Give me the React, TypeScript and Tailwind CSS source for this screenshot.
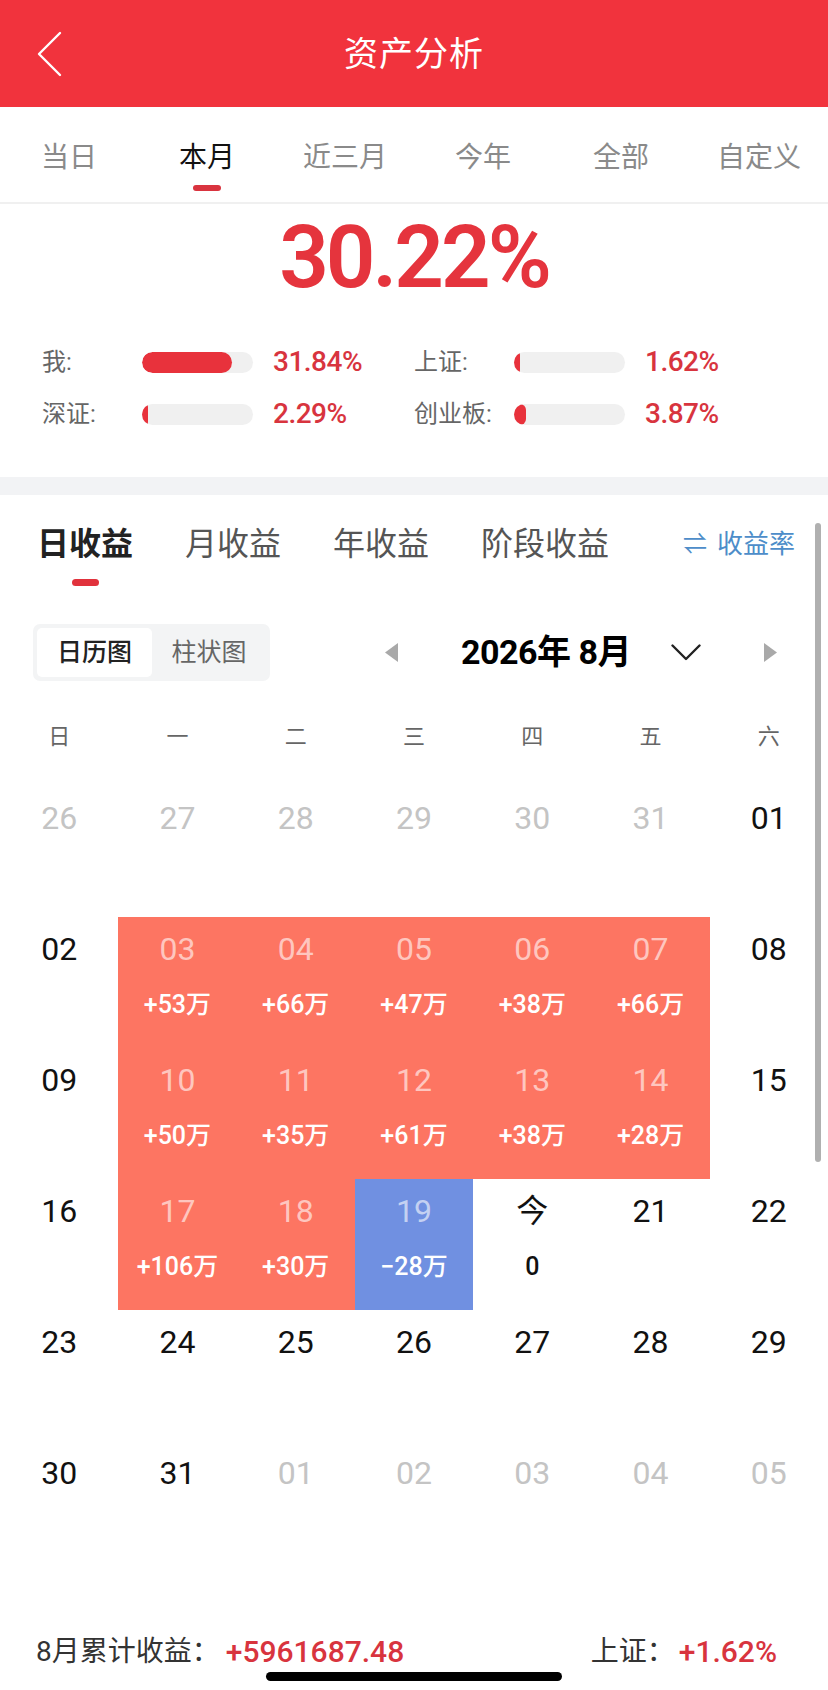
import React from "react";

/* ---------- Data ---------- */

const periodTabs = ["当日", "本月", "近三月", "今年", "全部", "自定义"];
const profitTabs = ["日收益", "月收益", "年收益", "阶段收益"];
const weekDays = ["日", "一", "二", "三", "四", "五", "六"];

type Compare = { label: string; fill: number; value: string };

const compares: Compare[] = [
  { label: "我:", fill: 90, value: "31.84%" },
  { label: "上证:", fill: 6, value: "1.62%" },
  { label: "深证:", fill: 6, value: "2.29%" },
  { label: "创业板:", fill: 12, value: "3.87%" },
];

type Day = {
  n: string;
  muted?: boolean;
  value?: string;
  tone?: "up" | "down" | "today";
};

const up = (n: string, value: string): Day => ({ n, value, tone: "up" });

const weeks: Day[][] = [
  [
    { n: "26", muted: true },
    { n: "27", muted: true },
    { n: "28", muted: true },
    { n: "29", muted: true },
    { n: "30", muted: true },
    { n: "31", muted: true },
    { n: "01" },
  ],
  [{ n: "02" }, up("03", "+53万"), up("04", "+66万"), up("05", "+47万"), up("06", "+38万"), up("07", "+66万"), { n: "08" }],
  [{ n: "09" }, up("10", "+50万"), up("11", "+35万"), up("12", "+61万"), up("13", "+38万"), up("14", "+28万"), { n: "15" }],
  [
    { n: "16" },
    up("17", "+106万"),
    up("18", "+30万"),
    { n: "19", value: "−28万", tone: "down" },
    { n: "今", value: "0", tone: "today" },
    { n: "21" },
    { n: "22" },
  ],
  [{ n: "23" }, { n: "24" }, { n: "25" }, { n: "26" }, { n: "27" }, { n: "28" }, { n: "29" }],
  [
    { n: "30" },
    { n: "31" },
    { n: "01", muted: true },
    { n: "02", muted: true },
    { n: "03", muted: true },
    { n: "04", muted: true },
    { n: "05", muted: true },
  ],
];

/* ---------- Pieces ---------- */

function CompareRow({ item }: { item: Compare }) {
  return (
    <div className="flex items-center h-[52px]">
      <span className="w-[100px] text-[24px] text-[#666]">{item.label}</span>
      <div className="w-[111px] h-[21px] rounded-full bg-[#f0f0f0] overflow-hidden">
        <div className="h-full rounded-full bg-[#e8323c]" style={{ width: item.fill }} />
      </div>
      <span className="ml-[20px] text-[28px] font-medium text-[#d8343e] leading-none tracking-[-0.5px]">{item.value}</span>
    </div>
  );
}

function DayCell({ day }: { day: Day }) {
  const bg =
    day.tone === "up" ? "bg-[#fd7562]" : day.tone === "down" ? "bg-[#7090e1]" : "";
  const numColor = day.muted
    ? "text-[#c4c4c4]"
    : day.tone === "up" || day.tone === "down"
      ? "text-white/60"
      : "text-[#111]";
  return (
    <div className={`h-[131px] flex flex-col items-center pt-[12px] ${bg}`}>
      <span className={`text-[32px] leading-[40px] ${numColor}`}>{day.n}</span>
      {day.value && (
        <span
          className={`mt-[21px] text-[25px] leading-[30px] font-medium ${
            day.tone === "today" ? "text-[#111]" : "text-white"
          }`}
        >
          {day.value}
        </span>
      )}
    </div>
  );
}

/* ---------- App ---------- */

export default function App() {
  return (
    <div className="relative w-[828px] h-[1690px] overflow-hidden bg-white font-[Roboto,'Noto_Sans_CJK_SC',sans-serif]">
      {/* header */}
      <div className="h-[107px] bg-[#f1333d] grid grid-cols-[110px_1fr_110px] items-center">
        <svg width="60" height="48" viewBox="0 0 60 48" className="ml-[24px]">
          <polyline points="36,3 15,24 36,45" fill="none" stroke="white" strokeWidth="2.4" strokeLinecap="round" strokeLinejoin="round" />
        </svg>
        <h1 className="text-center text-white text-[34px] leading-none tracking-[1px]">资产分析</h1>
        <div />
      </div>

      {/* period tabs */}
      <div className="h-[97px] flex border-b-2 border-[#f0f0f0]">
        {periodTabs.map((t) => {
          const active = t === "本月";
          return (
            <div key={t} className="flex-1 flex flex-col items-center pt-[33px]">
              <span className={`text-[28px] leading-[36px] ${active ? "text-[#111]" : "text-[#8a8a8a]"}`}>{t}</span>
              <span className={`mt-[9px] w-[28px] h-[6px] rounded-full ${active ? "bg-[#d9343f]" : "bg-transparent"}`} />
            </div>
          );
        })}
      </div>

      {/* total */}
      <div className="text-center pt-[8px]">
        <span className="text-[87px] leading-[90px] font-semibold tracking-[-3px] text-[#e5343d]">30.22%</span>
      </div>

      <div className="grid grid-cols-[372px_1fr] pl-[42px] pt-[34px] pb-[37px]">
        {compares.map((c) => (
          <CompareRow key={c.label} item={c} />
        ))}
      </div>

      <div className="h-[18px] bg-[#f2f3f5]" />

      {/* profit tabs */}
      <div className="flex items-start pl-[37px] pr-[33px] pt-[27px]">
        {profitTabs.map((t, i) => (
          <div key={t} className="flex flex-col items-center mr-[52px]">
            <span className={`text-[32px] leading-[44px] ${i === 0 ? "font-bold text-[#222]" : "text-[#555]"}`}>{t}</span>
            <span className={`mt-[13px] w-[27px] h-[7px] rounded-full ${i === 0 ? "bg-[#e1323c]" : "bg-transparent"}`} />
          </div>
        ))}
        <div className="ml-auto flex items-center h-[44px] text-[#4d8dc9] text-[26px] gap-[10px]">
          <span className="text-[24px]">⇌</span>
          <span>收益率</span>
        </div>
      </div>

      {/* view toggle + month */}
      <div className="flex items-center mt-[38px] pl-[33px]">
        <div className="w-[237px] h-[57px] rounded-[7px] bg-[#f3f4f5] flex items-center p-[4px]">
          <div className="w-[115px] h-[49px] rounded-[5px] bg-white flex items-center justify-center text-[25px] font-medium text-[#222]">日历图</div>
          <div className="flex-1 text-center text-[25px] text-[#666]">柱状图</div>
        </div>
        <svg width="15" height="19" viewBox="0 0 15 19" className="ml-[114px]">
          <polygon points="14,0 14,19 1,9.5" fill="#a9a9a9" />
        </svg>
        <span className="ml-[62px] text-[34px] font-bold text-black tracking-[-0.5px]">2026年 8月</span>
        <svg width="30" height="17" viewBox="0 0 30 17" className="ml-[40px]">
          <polyline points="1.5,1.5 15,15 28.5,1.5" fill="none" stroke="#222" strokeWidth="2.4" strokeLinecap="round" strokeLinejoin="round" />
        </svg>
        <svg width="15" height="19" viewBox="0 0 15 19" className="ml-[62px]">
          <polygon points="1,0 1,19 14,9.5" fill="#a9a9a9" />
        </svg>
      </div>

      {/* calendar */}
      <div className="grid grid-cols-7 mt-[30px] h-[50px] items-center">
        {weekDays.map((d) => (
          <span key={d} className="text-center text-[22px] text-[#666]">{d}</span>
        ))}
      </div>
      <div className="grid grid-cols-7 mt-[25px]">
        {weeks.flat().map((d, i) => (
          <DayCell key={i} day={d} />
        ))}
      </div>

      {/* summary */}
      <div className="flex items-center justify-between pl-[36px] pr-[51px] mt-[60px] leading-[40px]">
        <div className="flex items-center">
          <span className="text-[28px] text-[#333]">8月累计收益：</span>
          <span className="ml-[6px] text-[30px] font-medium text-[#d8343e]">+5961687.48</span>
        </div>
        <div className="flex items-center">
          <span className="text-[28px] text-[#333]">上证：</span>
          <span className="ml-[4px] text-[30px] font-medium text-[#d8343e]">+1.62%</span>
        </div>
      </div>

      {/* scrollbar + home indicator */}
      <div className="absolute left-[815px] top-[523px] w-[6px] h-[639px] rounded-full bg-[#b0b0b0]" />
      <div className="absolute left-[266px] top-[1672px] w-[296px] h-[9px] rounded-full bg-black" />
    </div>
  );
}
